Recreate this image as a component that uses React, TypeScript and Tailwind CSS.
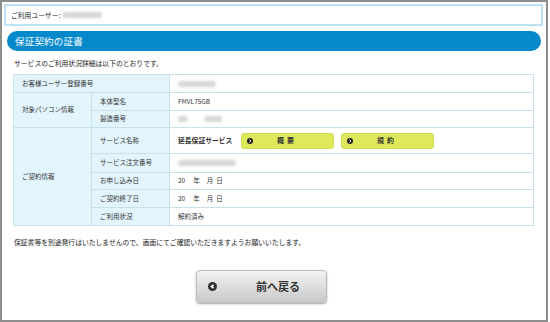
import React from 'react';

const jp = { fontFamily: '"Noto Sans CJK JP", "Liberation Sans", sans-serif' };

// blurred placeholder for masked values
function Masked({ w, className = '' }: { w: number; className?: string }) {
  return (
    <span
      className={`inline-block h-[6px] align-middle rounded-sm bg-[#d6d6d6] blur-[1.5px] ${className}`}
      style={{ width: w }}
    />
  );
}

function ArrowDot() {
  return (
    <svg width="6" height="6" viewBox="0 0 10 10" className="shrink-0">
      <circle cx="5" cy="5" r="5" fill="#222" />
      <path d="M4 2.6 L6.6 5 L4 7.4" stroke="#fff" strokeWidth="1.6" fill="none" />
    </svg>
  );
}

function LinkButton({ label }: { label: string }) {
  return (
    <button className="flex items-center w-[93px] h-[16px] rounded-[3px] bg-[#dde85a] border border-[#d2dd55] pl-[5px]">
      <ArrowDot />
      <span className="flex-1 text-center font-bold text-[7px] tracking-[3px] text-[#333] pr-[12px]">{label}</span>
    </button>
  );
}

const head = 'bg-[#e3f5fc] border border-[#c8e1ea] pl-[8px] text-left font-normal';
const cell = 'bg-white border border-[#c8e1ea] pl-[8px] text-left';

export default function App() {
  return (
    <div className="w-[548px] h-[322px] border-2 border-[#8e8e8e] bg-white text-[#1a1a1a] overflow-hidden" style={jp}>
      {/* user */}
      <div className="ml-[2px] mt-[2px] w-[539px] h-[22px] border-2 border-[#bce3f5] flex items-center pl-[5px] text-[6.8px]">
        <span>ご利用ユーザー:</span>
        <Masked w={40} className="ml-[2px]" />
      </div>

      {/* title bar */}
      <div className="ml-[5px] mt-[5px] w-[534px] h-[20px] rounded-full bg-[#0689cb] flex items-center pl-[8px]">
        <span className="text-white text-[9.5px] tracking-[0.2px]">保証契約の証書</span>
      </div>

      <p className="ml-[12px] mt-[7px] h-[10px] leading-[10px] text-[6.8px]">サービスのご利用状況詳細は以下のとおりです。</p>

      {/* detail table */}
      <table className="ml-[11px] mt-[6px] w-[521px] border-collapse border border-[#b9dae6] text-[6.5px] text-[#333]">
        <colgroup>
          <col className="w-[78px]" />
          <col className="w-[78px]" />
          <col />
        </colgroup>
        <tbody>
          <tr className="h-[18px]">
            <th colSpan={2} className={head}>お客様ユーザー登録番号</th>
            <td className={cell}><Masked w={38} /></td>
          </tr>
          <tr className="h-[18px]">
            <th rowSpan={2} className={head}>対象パソコン情報</th>
            <th className={head}>本体型名</th>
            <td className={cell}>FMVL75GB</td>
          </tr>
          <tr className="h-[17px]">
            <th className={head}>製造番号</th>
            <td className={cell}>
              <Masked w={10} />
              <Masked w={18} className="ml-[16px]" />
            </td>
          </tr>
          <tr className="h-[26px]">
            <th rowSpan={5} className={head}>ご契約情報</th>
            <th className={head}>サービス名称</th>
            <td className={cell}>
              <div className="flex items-center">
                <span className="font-bold text-[6.8px] w-[63px]">延長保証サービス</span>
                <LinkButton label="概要" />
                <div className="w-[7px]" />
                <LinkButton label="規約" />
              </div>
            </td>
          </tr>
          <tr className="h-[19px]">
            <th className={head}>サービス注文番号</th>
            <td className={cell}><Masked w={58} /></td>
          </tr>
          <tr className="h-[17px]">
            <th className={head}>お申し込み日</th>
            <td className={cell}>
              20<span className="inline-block w-[8px]" />年<span className="inline-block w-[7px]" />月<span className="inline-block w-[3px]" />日
            </td>
          </tr>
          <tr className="h-[18px]">
            <th className={head}>ご契約終了日</th>
            <td className={cell}>
              20<span className="inline-block w-[8px]" />年<span className="inline-block w-[7px]" />月<span className="inline-block w-[3px]" />日
            </td>
          </tr>
          <tr className="h-[18px]">
            <th className={head}>ご利用状況</th>
            <td className={cell}>解約済み</td>
          </tr>
        </tbody>
      </table>

      <p className="ml-[12px] mt-[11px] h-[10px] leading-[10px] text-[6.8px]">
        保証書等を別途発行はいたしませんので、画面にてご確認いただきますようお願いいたします。
      </p>

      {/* back */}
      <button className="ml-[194px] mt-[23px] w-[131px] h-[33px] rounded-[4px] border border-[#bdbdbd] bg-gradient-to-b from-[#f3f3f3] to-[#c9c9c9] shadow-[0_1px_2px_rgba(0,0,0,0.35)] flex items-center pl-[11px]">
        <svg width="9" height="9" viewBox="0 0 10 10">
          <circle cx="5" cy="5" r="5" fill="#333" />
          <path d="M6.2 3.2 L3.8 5 L6.2 6.8" stroke="#fff" strokeWidth="1.8" fill="none" />
        </svg>
        <span className="ml-[39px] text-[11px] font-bold text-[#333]">前へ戻る</span>
      </button>
    </div>
  );
}
